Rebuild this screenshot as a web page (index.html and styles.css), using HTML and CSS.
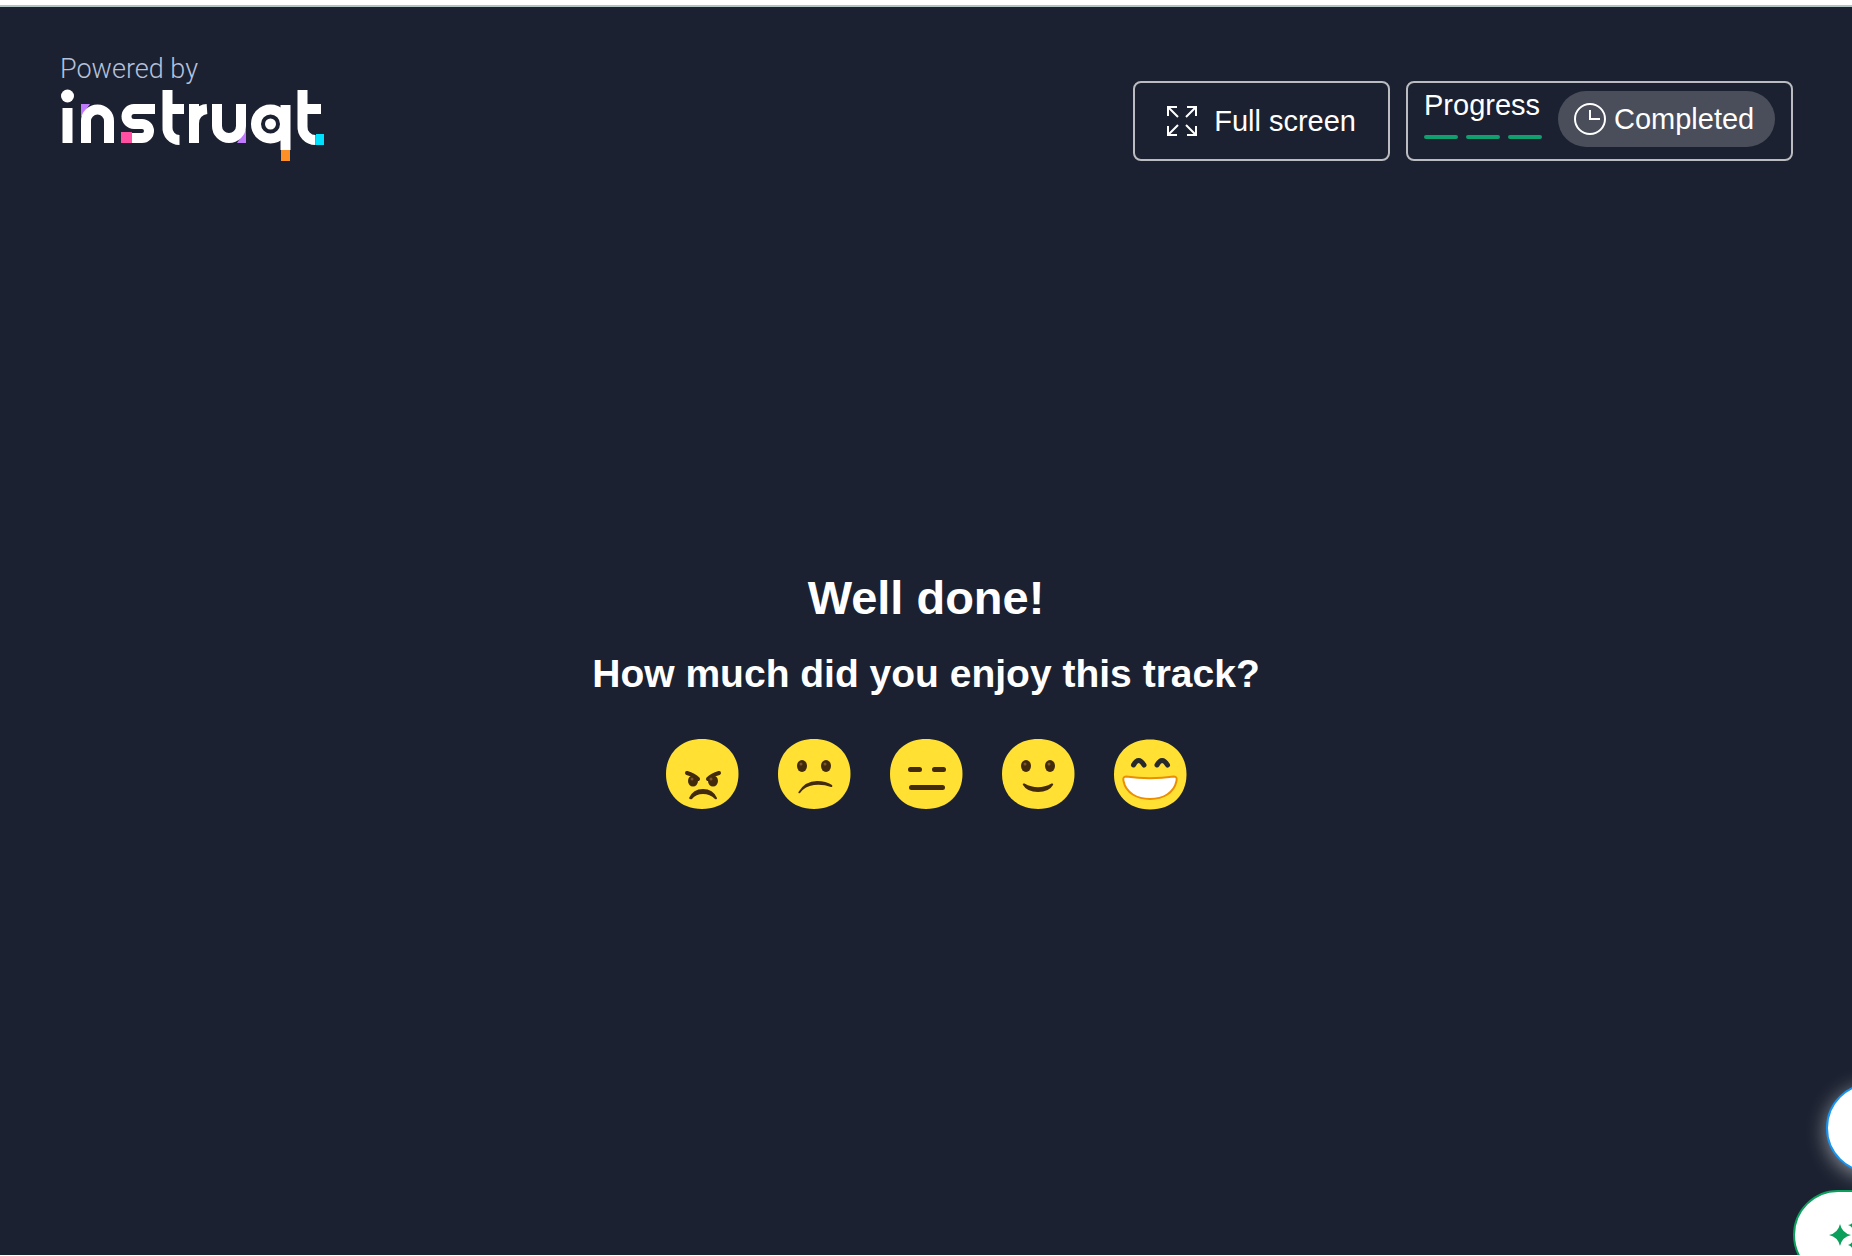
FILE: index.html
```html
<!DOCTYPE html>
<html lang="en">
<head>
<meta charset="utf-8">
<title>Instruqt track</title>
<link rel="stylesheet" href="styles.css">
</head>
<body>
<div class="track">
  <header class="header">
    <a class="brand" href="#">
      <span class="brand-note">Powered by</span>
      <svg class="logo" viewBox="60 89 265 73" role="img" aria-label="instruqt">
        <path fill="#c17aff" d="M81 104h9l-9 13zM237 143h9v-14z"/>
        <g fill="none" stroke="#fff" stroke-width="10">
          <path d="M67.500 108V143M86 143V121a11.500 11.500 0 0 1 23 0V143"/>
          <path d="M155 109H134a7.500 7.500 0 0 0 0 15H142a7 7 0 0 1 0 14H132"/>
          <path d="M167.500 90V127a12 12 0 0 0 12 13M163 109H184"/>
          <path d="M194 143V104M194 124a14 14 0 0 1 13-15"/>
          <path d="M217 104V126a12 12 0 0 0 24 0V104"/>
          <circle cx="270.500" cy="124" r="14.500"/>
          <path d="M285.500 105V150"/>
          <path d="M302.500 90V126a13 13 0 0 0 13 14M298 109H321"/>
        </g>
        <circle cx="67.500" cy="96" r="6.500" fill="#fff"/>
        <circle cx="270.500" cy="124" r="5.500" fill="#fff"/>
        <path fill="#ff4fa3" d="M121 132h11v11h-11z"/>
        <path fill="#ff9028" d="M281 150h9v11h-9z"/>
        <path fill="#00e0ff" d="M316 134h8v11h-8z"/>
      </svg>
    </a>
    <div class="actions">
      <button class="box fullscreen" type="button">
        <svg class="expand" viewBox="0 0 30 30" aria-hidden="true">
          <path d="M1 10V1h9M1 1l10 10M20 1h9v9M29 1L19 11M1 20v9h9M1 29l10-10M20 29h9v-9M29 29L19 19"/>
        </svg>
        <span>Full screen</span>
      </button>
      <div class="box status">
        <div class="progress">
          <span>Progress</span>
          <div class="steps"><i class="step"></i><i class="step"></i><i class="step"></i></div>
        </div>
        <div class="pill">
          <svg class="clock" viewBox="0 0 32 32" aria-hidden="true"><circle cx="16" cy="16" r="15"/><path d="M16 7v9h10"/></svg>
          <span>Completed</span>
        </div>
      </div>
    </div>
  </header>
  <main class="feedback">
    <h1 class="title">Well done!</h1>
    <h2 class="question">How much did you enjoy this track?</h2>
    <div class="faces">
      <button class="face" type="button" aria-label="Angry">
        <svg viewBox="0 0 72 72"><path class="skin" d="M36 1C58 1 72.500 16 72.500 36S58 71 36 71S0 56 0 36S14 1 36 1z"/>
          <ellipse class="eye" cx="27" cy="43" rx="5" ry="5.500"/><ellipse class="eye" cx="47" cy="43" rx="5" ry="5.500"/>
          <path class="line" d="M21 35Q28 37 32 41M53 35Q46 37 42 41"/><circle class="glint" cx="26" cy="41" r="1.500"/><circle class="glint" cx="45" cy="41" r="1.500"/>
          <path class="ink" d="M23 60Q27 51 37 51T51 60Q51 62 49 61Q44 56 37 56T26 61Q24 62 23 60z"/></svg>
      </button>
      <button class="face" type="button" aria-label="Unhappy">
        <svg viewBox="0 0 72 72"><path class="skin" d="M36 1C58 1 72.500 16 72.500 36S58 71 36 71S0 56 0 36S14 1 36 1z"/>
          <ellipse class="eye" cx="24" cy="28" rx="5" ry="6"/><ellipse class="eye" cx="48" cy="28" rx="5" ry="6"/><circle class="glint" cx="23" cy="26" r="1.500"/><circle class="glint" cx="47" cy="26" r="1.500"/>
          <path class="ink" d="M20.500 54Q27 43 39 43Q48 43 54 47Q55 49 53 49Q45 46 36 47T22 55Q20 56 20.500 54z"/></svg>
      </button>
      <button class="face" type="button" aria-label="Neutral">
        <svg viewBox="0 0 72 72"><path class="skin" d="M36 1C58 1 72.500 16 72.500 36S58 71 36 71S0 56 0 36S14 1 36 1z"/>
          <path class="bar" d="M20.500 31.500h9M44.500 31.500h9M21.500 49.500h31"/></svg>
      </button>
      <button class="face" type="button" aria-label="Happy">
        <svg viewBox="0 0 72 72"><path class="skin" d="M36 1C58 1 72.500 16 72.500 36S58 71 36 71S0 56 0 36S14 1 36 1z"/>
          <ellipse class="eye" cx="24" cy="28" rx="5" ry="6"/><ellipse class="eye" cx="48" cy="28" rx="5" ry="6"/><circle class="glint" cx="23" cy="26" r="1.500"/><circle class="glint" cx="47" cy="26" r="1.500"/>
          <path class="ink" d="M21 47Q20 45 22.500 45.500Q36 53 49.500 45.500Q52 45 51 47Q47 54 36 54T21 47z"/></svg>
      </button>
      <button class="face" type="button" aria-label="Delighted">
        <svg viewBox="0 0 72 72"><path class="skin" d="M36 1.500C58 1.500 72.500 16 72.500 36.500S58 71.500 36 71.500S0 56.500 0 36.500S14 1.500 36 1.500z"/>
          <path class="brow" d="M19.500 27q5-9 10.500 0M43 27q5-9 10.500 0"/>
          <path class="grin" d="M12 38.500Q36 42 60 38.500Q63.500 38.500 62.500 43C60 55 49 61 36 61S12 55 9.500 43Q8.500 38.500 12 38.500z"/></svg>
      </button>
    </div>
  </main>
  <div class="floating">
    <button class="float-chat" type="button" aria-label="Chat"></button>
    <button class="float-ai" type="button" aria-label="Assistant">
      <svg class="sparkles" viewBox="0 0 36 36"><path d="M12 7q2 9 11 11q-9 2-11 11q-2-9-11-11q9-2 11-11zM25 4q1 4 5 4q-4 1-5 5q-1-4-5-5q4 0 5-4zM25 23q1 4 5 5q-4 1-5 5q-1-4-5-5q4-1 5-5z"/></svg>
    </button>
  </div>
</div>
</body>
</html>
```
FILE: styles.css
```css
* { box-sizing: border-box; }

body {
  margin: 0;
  background: #fff;
  color: #fff;
  font-family: "Liberation Sans", Arial, sans-serif;
}

button {
  margin: 0;
  color: inherit;
  font: inherit;
  cursor: pointer;
}

.track {
  position: relative;
  display: flex;
  flex-direction: column;
  height: calc(100vh - 6px);
  margin-top: 5px;
  overflow: hidden;
  border-top: 2px solid #b1c4c5;
  background: #1b2130;
}

.header {
  display: flex;
  justify-content: space-between;
  align-items: flex-end;
  padding: 42px 59px 0 60px;
}

.brand {
  display: flex;
  flex-direction: column;
  color: #b4c0dc;
  text-decoration: none;
}

.brand-note {
  font: 300 27px/40px Roboto, sans-serif;
}

.logo {
  width: 265px;
  height: 73px;
}

.actions {
  display: flex;
  gap: 16px;
  margin-bottom: 1px;
}

.box {
  display: flex;
  height: 80px;
  border: 2px solid #bbbcc1;
  border-radius: 8px;
  background: transparent;
  font-size: 29px;
  line-height: 40px;
}

.fullscreen {
  align-items: center;
  gap: 17px;
  padding: 0 32px;
}

.expand {
  width: 30px;
  height: 30px;
  fill: none;
  stroke: #fff;
  stroke-width: 2;
}

.status {
  gap: 16px;
  padding: 2px 16px;
}

.progress {
  min-width: 118px;
}

.steps {
  display: flex;
  gap: 8px;
  margin-top: 10px;
}

.step {
  flex: 1;
  height: 4px;
  border-radius: 2px;
  background: #109f6e;
}

.pill {
  display: flex;
  align-items: center;
  gap: 8px;
  min-width: 217px;
  height: 56px;
  margin-top: 6px;
  padding: 0 16px;
  border-radius: 28px;
  background: #494e5a;
}

.clock {
  width: 32px;
  height: 32px;
  fill: none;
  stroke: #fff;
  stroke-width: 2;
}

.feedback {
  display: flex;
  flex: 1;
  flex-direction: column;
  align-items: center;
  justify-content: center;
  padding-bottom: 46px;
}

.title,
.question {
  margin: 0;
  font-weight: 700;
}

.title {
  font-size: 47px;
  line-height: 72px;
}

.question {
  margin-top: 8px;
  font-size: 39px;
  line-height: 64px;
}

.faces {
  display: flex;
  gap: 40px;
  margin-top: 32px;
}

.face {
  width: 72px;
  height: 72px;
  padding: 0;
  border: 0;
  background: none;
}

.face svg {
  display: block;
  overflow: visible;
}

.skin { fill: #ffe033; }
.eye, .ink { fill: #422b0d; }
.glint { fill: #7a5527; }
.line, .bar, .brow { fill: none; stroke: #422b0d; stroke-linecap: round; }
.line { stroke-width: 4; }
.bar { stroke-width: 5; }
.brow { stroke: #272a2b; stroke-width: 5; }
.grin { fill: #fff; stroke: #eb8f00; stroke-width: 2; }

.floating {
  position: absolute;
  right: -64px;
  bottom: -25px;
  display: flex;
  flex-direction: column;
  gap: 17px;
}

.float-chat,
.float-ai {
  height: 90px;
  border-radius: 45px;
  background: #fff;
}

.float-chat {
  width: 90px;
  margin-left: 33px;
  border: 2px solid #1695f3;
  box-shadow: 0 4px 20px rgba(255, 255, 255, 0.5);
}

.float-ai {
  width: 122px;
  padding: 0 0 0 33px;
  border: 2px solid #0b9f5c;
  text-align: left;
}

.sparkles {
  display: block;
  width: 36px;
  height: 36px;
  fill: #0b9f5c;
}
```
